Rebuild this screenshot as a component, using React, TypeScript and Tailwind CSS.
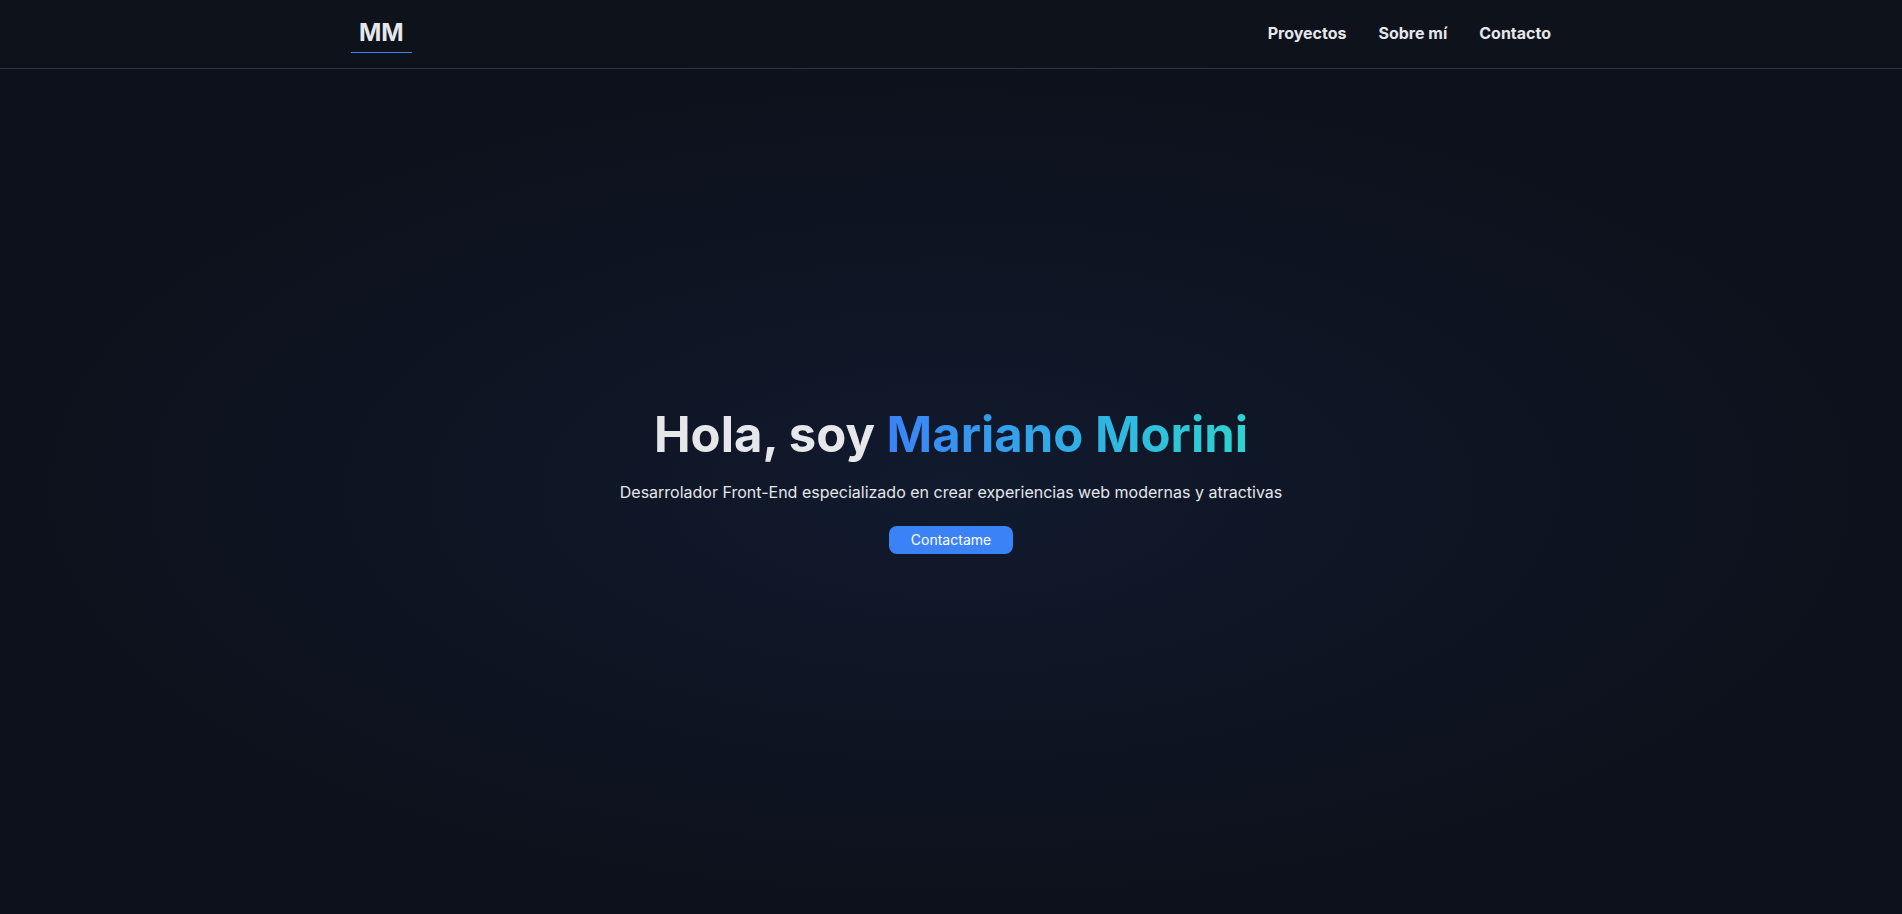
import React from "react";

export default function App() {
  return (
    <div
      className="min-h-screen w-full bg-[#0d111b] text-[#e5e7eb]"
      style={{ fontFamily: "Inter, 'Noto Sans', sans-serif" }}
    >
      <header className="h-[69px] border-b border-[#2f3546] bg-[#0e121b]">
        <div className="mx-auto flex h-full max-w-[1200px] items-center justify-between pb-[2px]">
          <a className="relative px-2 text-[24px] font-bold leading-[30px] text-[#e5e7eb]">
            MM
            <span className="absolute left-0 right-0 -bottom-[5px] h-px bg-[#3b82f6]" />
          </a>
          <nav className="flex items-center gap-8 text-[16px] font-bold">
            <a>Proyectos</a>
            <a>Sobre mí</a>
            <a>Contacto</a>
          </nav>
        </div>
      </header>
      <main className="flex h-[845px] items-center justify-center bg-[radial-gradient(ellipse_at_center,#111a2e_0%,#0e1422_40%,#0d111b_75%)] pb-[25px]">
        <div className="flex flex-col items-center">
          <h1 className="text-[49px] font-bold leading-[59px] text-[#e5e7eb]">
            Hola, soy{" "}
            <span className="bg-gradient-to-r from-[#3b82f6] to-[#2dd4d0] bg-clip-text text-transparent">
              Mariano Morini
            </span>
          </h1>
          <p className="mt-[16px] text-[16px] leading-[24px] text-[#e5e7eb]">
            Desarrolador Front-End especializado en crear experiencias web modernas y atractivas
          </p>
          <button className="mt-[22px] h-[28px] rounded-lg bg-[#3b82f6] px-[22px] text-[14px] text-white">
            Contactame
          </button>
        </div>
      </main>
    </div>
  );
}
